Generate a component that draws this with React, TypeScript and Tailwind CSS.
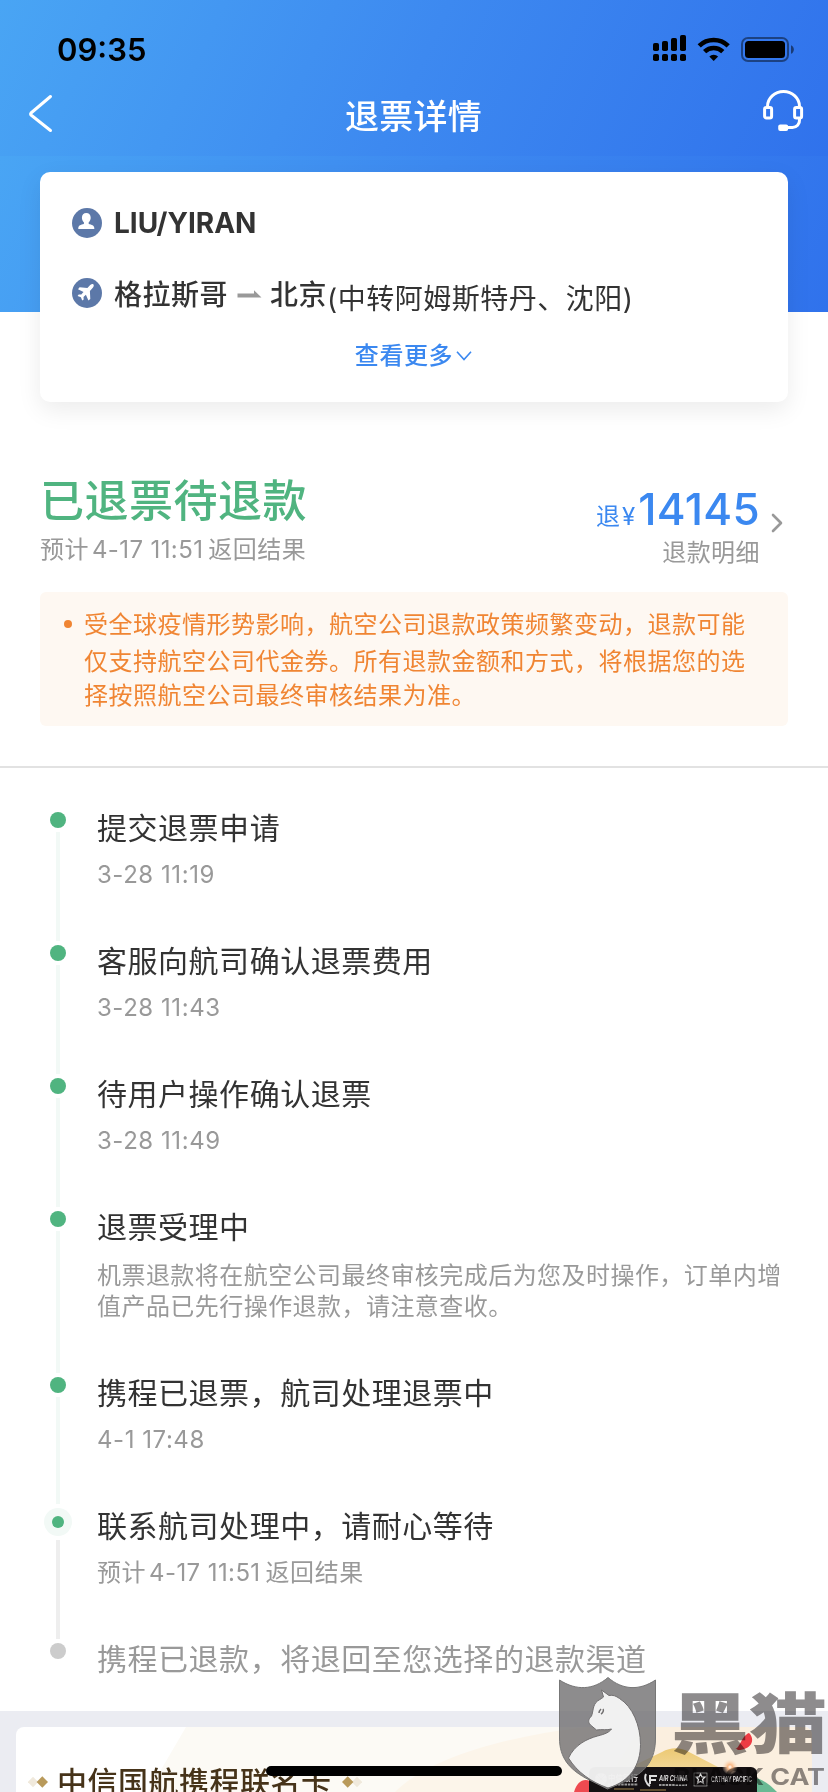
import type { ReactNode } from "react"
import clsx from "clsx"

type StepState = "done" | "current" | "pending"

type Step = {
  title: string
  note: ReactNode
  state: StepState
  long?: boolean
}

const steps: Step[] = [
  { title: "提交退票申请", note: "3-28 11:19", state: "done" },
  { title: "客服向航司确认退票费用", note: "3-28 11:43", state: "done" },
  { title: "待用户操作确认退票", note: "3-28 11:49", state: "done" },
  {
    title: "退票受理中",
    note: "机票退款将在航空公司最终审核完成后为您及时操作，订单内增值产品已先行操作退款，请注意查收。",
    state: "done",
    long: true,
  },
  { title: "携程已退票，航司处理退票中", note: "4-1 17:48", state: "done" },
  { title: "联系航司处理中，请耐心等待", note: <Expected />, state: "current" },
  { title: "携程已退款，将退回至您选择的退款渠道", note: null, state: "pending" },
]

function Expected() {
  return (
    <>
      预计<span className="mr-[5px] ml-[3px] tracking-[0.4px]">4-17 11:51</span>返回结果
    </>
  )
}

function StatusBar() {
  const tops = [43, 41, 38, 35]
  return (
    <div className="flex h-[84px] items-start justify-between pl-[57px] pr-[34px]">
      <span className="mt-[30px] text-[31px] leading-[40px] font-semibold text-black">09:35</span>
      <svg className="mt-[35px]" width="141" height="28" viewBox="653 35 141 28">
        {tops.map((top, i) => (
          <g key={top}>
            <rect x={653 + i * 9} y={top} width="6" height={51 - top} rx="1.8" />
            <rect x={653 + i * 9} y="54" width="6" height="7" rx="1.8" />
          </g>
        ))}
        <g fill="none" stroke="#000" strokeWidth="4.6">
          <path d="M699.2 45.8a21 21 0 0 1 29 0" />
          <path d="M704.6 51.6a13.2 13.2 0 0 1 18.2 0" />
        </g>
        <path d="M713.7 61l-4.4-4.5a6.6 6.6 0 0 1 8.8 0z" />
        <rect x="742" y="38" width="46" height="23" rx="6" fill="none" stroke="#000" strokeOpacity=".45" strokeWidth="2" />
        <rect x="745" y="41" width="40" height="17" rx="3.5" />
        <path d="M791 45.2c3.8 1.2 3.8 7.4 0 8.6z" fillOpacity=".5" />
      </svg>
    </div>
  )
}

function NavBar() {
  return (
    <div className="flex h-[72px] items-start justify-between pl-[28px] pr-[24px]">
      <svg className="mt-[10px]" width="26" height="40" viewBox="0 0 26 40" fill="none" stroke="#fff" strokeWidth="3" strokeLinecap="round" strokeLinejoin="round">
        <path d="M22.5 2.5L3 19a1.4 1.4 0 0 0 0 2l19.500 15.500" />
      </svg>
      <h1 className="mt-[9px] ml-[11px] text-[34px] leading-[48px] font-medium tracking-[0.3px] text-white">
        退票详情
      </h1>
      <svg className="mt-[6px]" width="42" height="42" viewBox="0 0 42 42" fill="none" stroke="#fff" strokeWidth="3">
        <path d="M5.500 17.500v-1a16 15 0 0 1 32 0v1" />
        <rect x="2.600" y="17.500" width="7" height="10.500" rx="1.800" />
        <rect x="32.600" y="17.500" width="7" height="10.500" rx="1.800" />
        <path d="M37.500 28.500v1.500a7 7 0 0 1-7 7.500h-5" />
        <rect x="16.200" y="34.500" width="10" height="6.500" rx="2" fill="#fff" stroke="none" />
      </svg>
    </div>
  )
}

function TripCard() {
  return (
    <section className="mx-10 mt-4 flex h-[230px] flex-col rounded-[10px] bg-white px-8 text-[28px] text-[#333] shadow-[0_8px_24px_rgba(0,0,0,0.08)]">
      <div className="mt-[36px] flex h-[30px] items-center">
        <svg width="30" height="30" viewBox="0 0 30 30">
          <circle cx="15" cy="15" r="15" fill="#5c78a8" />
          <path
            d="M14.300 5c2.700 0 4.400 2 4.400 4.700 0 1.900-.8 3.500-2 4.500v1.900c3 .7 5.600 1.600 5.600 4v1H6.300v-1c0-2.400 2.600-3.300 5.600-4v-1.900c-1.200-1-2-2.600-2-4.500C9.900 7 11.600 5 14.300 5z"
            fill="#fff"
          />
        </svg>
        <span className="ml-[12px] text-[28px] leading-[34px] font-bold">LIU/YIRAN</span>
      </div>
      <div className="mt-[40px] flex h-[30px] items-center whitespace-nowrap">
        <svg width="30" height="30" viewBox="0 0 30 30">
          <circle cx="15" cy="15" r="15" fill="#5c78a8" />
          <path
            d="M21.300 6.200c.8.700.6 2.300-.5 3.500l-2.900 3.200.4 8-1.900 1.700-2.500-5.900-2.400 2.200.2 2.600-1.500 1.100-1.300-3.400-3.300-1.300 1.100-1.500 2.600.2 2.200-2.500-5.500-2.800 1.600-2 7.800.8 2.800-3c1.100-1.100 2.500-1.400 3.100-.9z"
            fill="#fff"
          />
        </svg>
        <span className="mt-[3px] ml-[12px] font-medium tracking-[0.5px]">格拉斯哥</span>
        <svg className="mr-[8px] ml-[9px] mt-[2px]" width="25" height="8" viewBox="0 0 25 8">
          <path d="M.5 3.500h16.500V.3L24.500 7.500H.5z" fill="#999" />
        </svg>
        <span className="mt-[3px] font-medium tracking-[0.5px]">北京</span>
        <span className="mt-[11px] tracking-[0.5px]">(中转阿姆斯特丹、沈阳)</span>
      </div>
      <div className="mt-[31px] flex h-[34px] items-center justify-center pr-[1px] text-[24px] font-medium tracking-[0.6px] text-[#3b88f0]">
        查看更多
        <svg className="ml-[3px]" width="16" height="10" viewBox="0 0 16 10" fill="none" stroke="currentColor" strokeWidth="1.600">
          <path d="M1 .8l7 7.800 7-7.800" />
        </svg>
      </div>
    </section>
  )
}

function RefundSummary() {
  return (
    <section className="mx-10 mt-[68px] flex h-[122px] justify-between">
      <div>
        <h2 className="mt-[5px] text-[44px] leading-[52px] font-medium tracking-[0.5px] text-[#50b480]">
          已退票待退款
        </h2>
        <p className="mt-[6px] text-[24px] leading-[34px] tracking-[0.45px] text-[#999]">
          <Expected />
        </p>
      </div>
      <div className="flex">
        <div className="flex flex-col items-end">
          <p className="mt-[13px] text-[24px] leading-[52px] text-[#3b88f0]">
            退<span className="ml-[2px]">¥</span>
            <span className="ml-[3px] text-[44px] font-medium tracking-[0.3px]">14145</span>
          </p>
          <p className="-mt-[7px] text-[24px] leading-[34px] tracking-[0.45px] text-[#999]">退款明细</p>
        </div>
        <svg className="mt-[43px] mr-[5px] ml-[11px]" width="12" height="20" viewBox="0 0 12 20" fill="none" stroke="#999" strokeWidth="2.600" strokeLinecap="round" strokeLinejoin="round">
          <path d="M2 2l8 8-8 8" />
        </svg>
      </div>
    </section>
  )
}

function Notice() {
  return (
    <section className="mx-10 flex h-[134px] rounded-[6px] bg-[#fef8f2] pl-6 text-[24px] tracking-[0.5px] whitespace-nowrap text-[#f08533]">
      <i className="mt-[28px] mr-[12px] size-2 shrink-0 rounded-full bg-[#f08533]" />
      <div>
        <p className="mt-[15px] h-[38px] leading-[36px]">受全球疫情形势影响，航空公司退款政策频繁变动，退款可能</p>
        <p className="leading-[34px]">仅支持航空公司代金券。所有退款金额和方式，将根据您的选</p>
        <p className="leading-[34px]">择按照航空公司最终审核结果为准。</p>
      </div>
    </section>
  )
}

function Marker({ state, beforeCurrent }: { state: StepState; beforeCurrent: boolean }) {
  return (
    <div className="flex w-4 shrink-0 flex-col items-center">
      {state === "current" ? (
        <span className="-mt-0.5 flex size-7 shrink-0 items-center justify-center rounded-full bg-[#f2f9f6]">
          <i className="size-3 rounded-full bg-[#50b480]" />
        </span>
      ) : (
        <i className={clsx("size-4 shrink-0 rounded-full", state === "done" ? "bg-[#50b480]" : "bg-[#ccc]")} />
      )}
      {state !== "pending" && (
        <i
          className={clsx(
            "mt-1 w-1 flex-1",
            beforeCurrent ? "mb-1.5" : "mb-1",
            state === "current" ? "bg-[#eee]" : "bg-[#f2f9f6]"
          )}
        />
      )}
    </div>
  )
}

function Timeline() {
  return (
    <ol className="flex h-[943px] flex-col overflow-hidden pt-[44px] pl-[50px]">
      {steps.map((step, i) => (
        <li key={step.title} className={clsx("flex shrink-0", step.long ? "h-[166px]" : "h-[133px]")}>
          <Marker state={step.state} beforeCurrent={steps[i + 1]?.state === "current"} />
          <div className="ml-[31px] w-[700px]">
            <h3
              className={clsx(
                "text-[30px] leading-[32px] tracking-[0.53px]",
                step.state === "pending" ? "text-[#999]" : "text-[#333]"
              )}
            >
              {step.title}
            </h3>
            <p
              className={clsx(
                "text-[24px] leading-[31px] text-[#999]",
                step.long ? "mt-[17px] tracking-[0.45px]" : "mt-[15px] tracking-[0.55px]"
              )}
            >
              {step.note}
            </p>
          </div>
        </li>
      ))}
    </ol>
  )
}

function Diamonds({ flip }: { flip?: boolean }) {
  return (
    <svg className={clsx("shrink-0", flip && "-scale-x-100")} width="20" height="12" viewBox="0 0 20 12">
      <path d="M5 .8L10.200 6 5 11.200-.2 6z" fill="#f0e9dc" />
      <path d="M14.300.3L20 6l-5.700 5.700L8.600 6z" fill="#b99a5b" />
    </svg>
  )
}

function Promo() {
  return (
    <section className="flex-1 bg-[#ebecf2] px-4 pt-4">
      <div className="relative h-[65px] overflow-hidden rounded-t-[8px] bg-white">
        <svg className="absolute inset-0" width="796" height="65" viewBox="16 1727 796 65">
          <defs>
            <linearGradient id="hill" x1="0" y1="0" x2="0" y2="1">
              <stop offset="0" stopColor="#ecc973" />
              <stop offset="1" stopColor="#f7e6bd" />
            </linearGradient>
            <radialGradient id="spark">
              <stop offset="0" stopColor="#fff" />
              <stop offset=".3" stopColor="#fbb985" />
              <stop offset="1" stopColor="#fbe5d0" stopOpacity="0" />
            </radialGradient>
          </defs>
          <path d="M186 1727H812v65H148z" fill="#fcfaf5" />
          <path d="M395 1792c35-35 110-55 190-65h227v65z" fill="#fcf5ea" />
          <path d="M640 1727h172v65H600z" fill="#fbefdf" />
          <path d="M612 1776l50-24c9-5 18-5 27 0l58 30v10H600z" fill="url(#hill)" />
          <path d="M574 1792c3-10 9-14 16-11v11z" fill="#ee4a50" />
          <path d="M735 1748c4 3 6-12 14-15 7 7 2 17-11 17z" fill="#ee3c44" />
          <path d="M755 1778c10 2 16 8 22 14h-22z" fill="#69b993" />
          <rect x="589" y="1767" width="168" height="40" rx="6" fill="#141012" />
          <circle cx="730" cy="1767" r="8" fill="url(#spark)" />
          <circle cx="601" cy="1779" r="6" fill="#c9c7c7" />
          <path d="M601 1773v12M595 1779h12M597 1775l8 8M605 1775l-8 8" stroke="#555" strokeWidth=".8" />
          <path d="M646 1774c-2 4 0 10 4 12M650 1784v-8h7M650 1780h6" stroke="#ddd" strokeWidth="2" fill="none" />
          <rect x="694" y="1773" width="13" height="13" fill="none" stroke="#aaa" strokeWidth=".7" />
          <path d="M700.500 1774l1.500 3h3l-2.500 2.500 1 4-3-2-3 2 1-4-2.500-2.500h3z" fill="none" stroke="#ddd" strokeWidth="1.200" />
          <g fill="#d8d6d6" fontWeight="700">
            <text x="608" y="1781" fontSize="8" textLength="30" lengthAdjust="spacingAndGlyphs">中信银行</text>
            <text x="659" y="1781" fontSize="7" fontStyle="italic" textLength="29" lengthAdjust="spacingAndGlyphs">AIR CHINA</text>
            <text x="711" y="1782" fontSize="7" textLength="41" lengthAdjust="spacingAndGlyphs">CATHAY PACIFIC</text>
          </g>
          <path d="M608 1784.500h30M659 1785h28" stroke="#999" strokeWidth="2" strokeDasharray="2.500 .8" />
          <path d="M614 1789h20M640 1790h26" stroke="#a3874c" strokeWidth="1.200" />
        </svg>
        <div className="relative mt-[35px] ml-[12px] flex items-center text-[30px] leading-[40px] font-medium tracking-[0.5px] whitespace-nowrap text-[#463319]">
          <Diamonds />
          <span className="mr-[10px] ml-[9px]">中信国航携程联名卡</span>
          <Diamonds flip />
        </div>
      </div>
    </section>
  )
}

function Watermark() {
  return (
    <div className="pointer-events-none absolute right-0 bottom-0 h-[118px] w-[272px]">
      <svg width="272" height="118" viewBox="556 1674 272 118">
        <path
          d="M559.500 1680c17 11 34 10 48.500-2.500 14.500 12.500 31 13.500 47.500 2.500v58c0 22-10 33-25 41l-23 10-22-11c-16-9-26-20-26-40z"
          fill="#716f70"
          fillOpacity=".8"
          stroke="#777"
        />
        <path
          d="M601.500 1690l7.500 5.500c4-.8 7 .5 10.500 3 13 8 21 27 21 46 0 20-10 37-32.500 43.500-17-6-31-16-39.500-30 6-13 18-19 29-22 8-2 12-4 14-7-5 1.500-9 0-15 1l-6-5c-3-3-2-6 1-9 2-5 1-11 6-15 3-2 5-3 6-4z"
          fill="#fff"
          fillOpacity=".88"
          stroke="#716f70"
        />
        <path d="M599 1713c0-2 1-3 2-4M603 1709c1 1 0 4-2 5" fill="none" stroke="#716f70" strokeWidth="1.500" />
      </svg>
    </div>
  )
}

function WatermarkText() {
  return (
    <svg className="pointer-events-none absolute right-0 bottom-0 mix-blend-multiply" width="160" height="118" viewBox="668 1674 160 118" fill="#8e8c8d" fontWeight="900">
      <text transform="translate(671 1748) scale(1 .87)" fontSize="76" textLength="156" lengthAdjust="spacingAndGlyphs">
        黑猫
      </text>
      <text x="673" y="1784.500" fontSize="22.500" fontWeight="700" textLength="152" lengthAdjust="spacingAndGlyphs">
        BLACK CAT
      </text>
    </svg>
  )
}

export default function App() {
  return (
    <main className="relative flex h-[1792px] w-[828px] flex-col overflow-hidden bg-white font-['Inter','Noto_Sans_CJK_SC',sans-serif]">
      <header className="h-[312px] shrink-0">
        <div className="h-[156px] bg-[linear-gradient(115deg,#49a5f4_0%,#3d89f0_50%,#3072ec_100%)]">
          <StatusBar />
          <NavBar />
        </div>
        <div className="flow-root h-[156px] bg-[linear-gradient(115deg,#49a5f4_0%,#3d89f0_50%,#3072ec_100%)]">
          <TripCard />
        </div>
      </header>
      <div className="shrink-0 pt-[90px]">
        <RefundSummary />
        <Notice />
      </div>
      <div className="mt-10 h-0.5 shrink-0 bg-[#e2e2e2]" />
      <Timeline />
      <Promo />
      <div className="absolute top-[1766px] left-[266px] h-[10px] w-[296px] rounded-full bg-black" />
      <Watermark />
      <WatermarkText />
    </main>
  )
}
